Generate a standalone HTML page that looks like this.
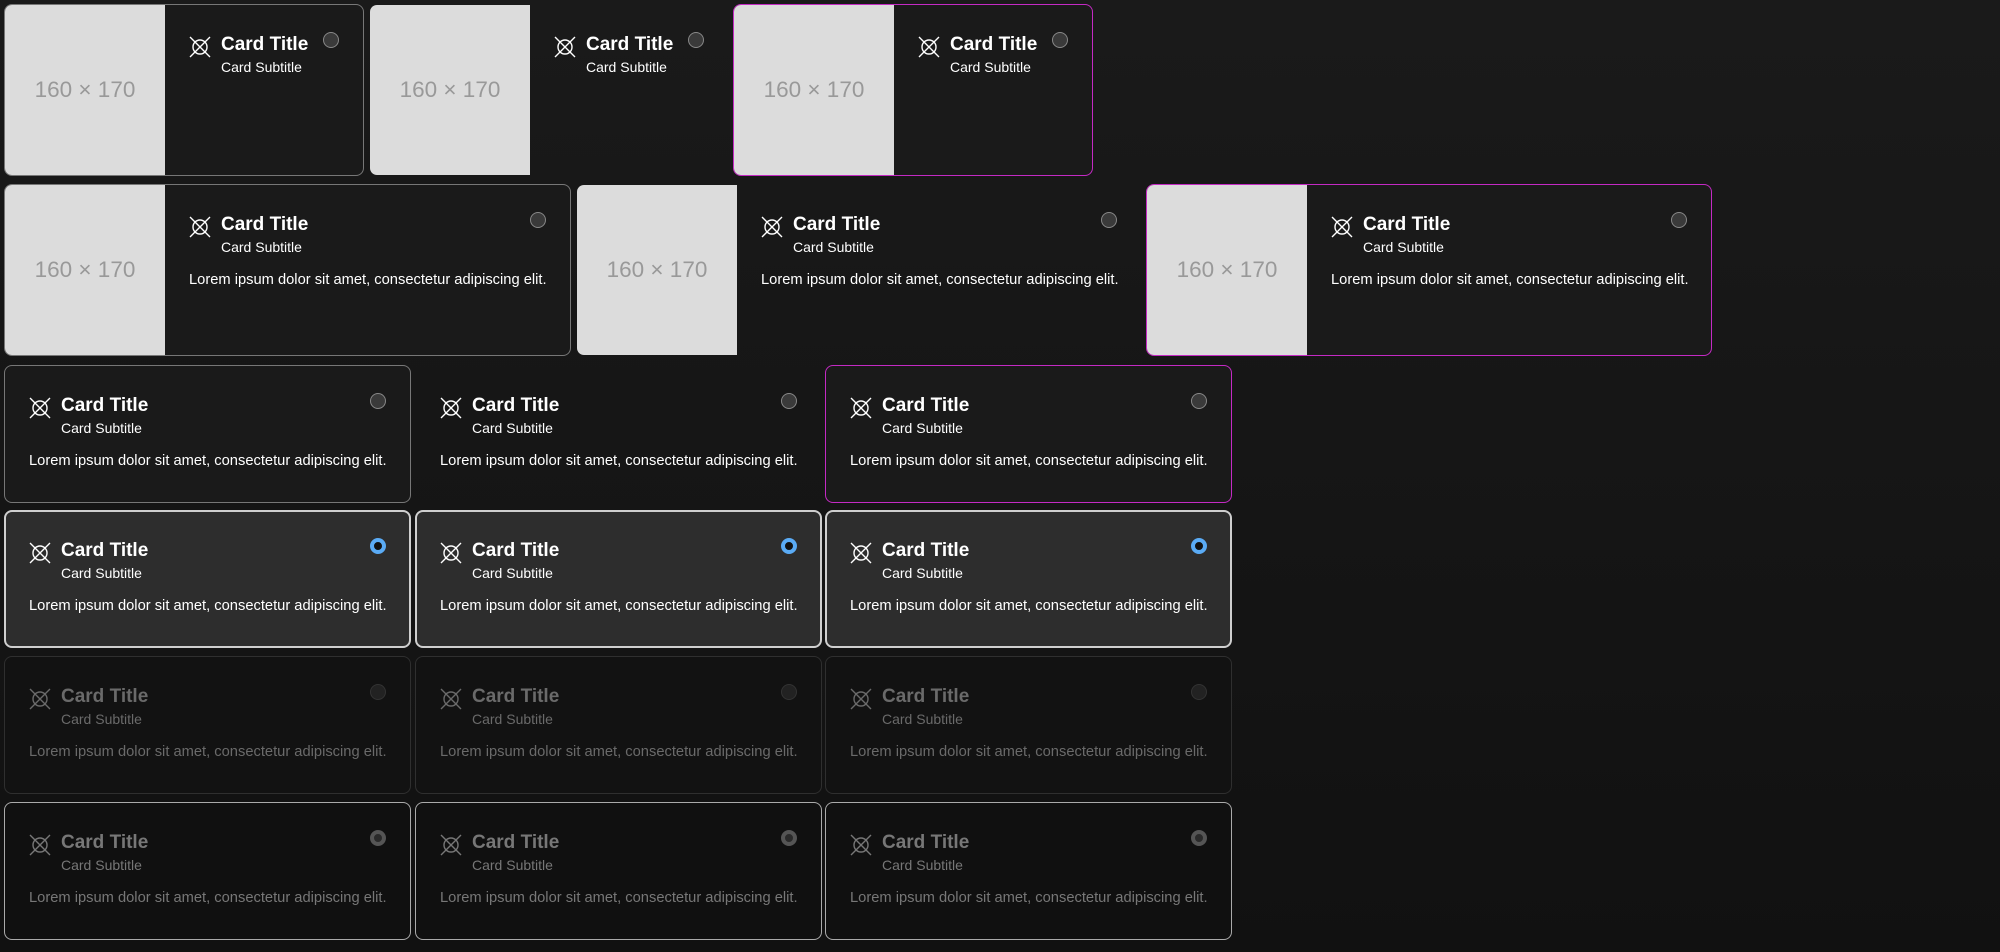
<!DOCTYPE html>
<html><head><meta charset="utf-8"><style>
*{box-sizing:border-box;margin:0;padding:0}
html,body{width:2000px;height:952px;overflow:hidden}
body{background:linear-gradient(#1a1a1a,#111);font-family:"Liberation Sans",sans-serif;position:relative}
.c{position:absolute;border:1px solid #777;border-radius:8px;background:#1a1a1a;overflow:hidden;color:#fff}
.nb{border-color:transparent;background:transparent}
.mg{border-color:#c42ac4}
.sel{border:2px solid #cfcfcf;background:#2d2d2d}
.dis{border-color:#2f2f2f;background:#121212;color:#6a6a6a}
.dc{border:1.5px solid #aaa;background:#101010;color:#777}
.img{position:absolute;left:0;top:0;width:160px;height:100%;background:#dcdcdc;color:#999;font-size:22.5px;font-weight:500;display:flex;align-items:center;justify-content:center}
.ct{position:absolute;top:0;bottom:0;right:0}
.ic{position:absolute;left:24px;top:31px;width:22px;height:22px}
.t{position:absolute;left:56px;top:30px;font-size:19px;line-height:19px;font-weight:bold;white-space:nowrap}
.s{position:absolute;left:56px;top:55px;font-size:14px;line-height:14px;white-space:nowrap}
.b{position:absolute;left:24px;top:88px;font-size:14.7px;line-height:15px;white-space:nowrap}
.r{position:absolute;right:24px;top:27px;width:16px;height:16px;border-radius:50%;background:#3a3a3a;border:1px solid #888}
.sel .r{background:#111;border:4.5px solid #5aabf5;right:23px;top:26px}
.dis .r{background:#222;border-color:#333}
.dc .r{background:#2a2a2a;border:4.5px solid #555}
</style></head><body>
<svg width="0" height="0" style="position:absolute"><defs><symbol id="i" viewBox="0 0 22 22"><circle cx="11" cy="11" r="7" fill="none" stroke="currentColor" stroke-width="1.4"/><path d="M1 1L21 21M21 1L1 21" stroke="currentColor" stroke-width="1.4"/></symbol></defs></svg>

<div class="c" style="left:4px;top:4px;width:360px;height:172px"><div class="img">160 × 170</div><div class="ct" style="left:160px"><svg class="ic"><use href="#i"/></svg><div class="t">Card Title</div><div class="s">Card Subtitle</div><div class="r"></div></div></div>
<div class="c nb" style="left:369px;top:4px;width:360px;height:172px"><div class="img">160 × 170</div><div class="ct" style="left:160px"><svg class="ic"><use href="#i"/></svg><div class="t">Card Title</div><div class="s">Card Subtitle</div><div class="r"></div></div></div>
<div class="c mg" style="left:733px;top:4px;width:360px;height:172px"><div class="img">160 × 170</div><div class="ct" style="left:160px"><svg class="ic"><use href="#i"/></svg><div class="t">Card Title</div><div class="s">Card Subtitle</div><div class="r"></div></div></div>

<div class="c" style="left:4px;top:184px;width:567px;height:172px"><div class="img">160 × 170</div><div class="ct" style="left:160px"><svg class="ic"><use href="#i"/></svg><div class="t">Card Title</div><div class="s">Card Subtitle</div><div class="b">Lorem ipsum dolor sit amet, consectetur adipiscing elit.</div><div class="r"></div></div></div>
<div class="c nb" style="left:576px;top:184px;width:566px;height:172px"><div class="img">160 × 170</div><div class="ct" style="left:160px"><svg class="ic"><use href="#i"/></svg><div class="t">Card Title</div><div class="s">Card Subtitle</div><div class="b">Lorem ipsum dolor sit amet, consectetur adipiscing elit.</div><div class="r"></div></div></div>
<div class="c mg" style="left:1146px;top:184px;width:566px;height:172px"><div class="img">160 × 170</div><div class="ct" style="left:160px"><svg class="ic"><use href="#i"/></svg><div class="t">Card Title</div><div class="s">Card Subtitle</div><div class="b">Lorem ipsum dolor sit amet, consectetur adipiscing elit.</div><div class="r"></div></div></div>

<div class="c" style="left:4px;top:365px;width:407px;height:138px"><svg class="ic"><use href="#i"/></svg><div class="t">Card Title</div><div class="s">Card Subtitle</div><div class="b">Lorem ipsum dolor sit amet, consectetur adipiscing elit.</div><div class="r"></div></div>
<div class="c nb" style="left:415px;top:365px;width:407px;height:138px"><svg class="ic"><use href="#i"/></svg><div class="t">Card Title</div><div class="s">Card Subtitle</div><div class="b">Lorem ipsum dolor sit amet, consectetur adipiscing elit.</div><div class="r"></div></div>
<div class="c mg" style="left:825px;top:365px;width:407px;height:138px"><svg class="ic"><use href="#i"/></svg><div class="t">Card Title</div><div class="s">Card Subtitle</div><div class="b">Lorem ipsum dolor sit amet, consectetur adipiscing elit.</div><div class="r"></div></div>

<div class="c sel" style="left:4px;top:510px;width:407px;height:138px"><svg class="ic" style="left:23px;top:30px"><use href="#i"/></svg><div class="t" style="left:55px;top:29px">Card Title</div><div class="s" style="left:55px;top:54px">Card Subtitle</div><div class="b" style="left:23px;top:87px">Lorem ipsum dolor sit amet, consectetur adipiscing elit.</div><div class="r"></div></div>
<div class="c sel" style="left:415px;top:510px;width:407px;height:138px"><svg class="ic" style="left:23px;top:30px"><use href="#i"/></svg><div class="t" style="left:55px;top:29px">Card Title</div><div class="s" style="left:55px;top:54px">Card Subtitle</div><div class="b" style="left:23px;top:87px">Lorem ipsum dolor sit amet, consectetur adipiscing elit.</div><div class="r"></div></div>
<div class="c sel" style="left:825px;top:510px;width:407px;height:138px"><svg class="ic" style="left:23px;top:30px"><use href="#i"/></svg><div class="t" style="left:55px;top:29px">Card Title</div><div class="s" style="left:55px;top:54px">Card Subtitle</div><div class="b" style="left:23px;top:87px">Lorem ipsum dolor sit amet, consectetur adipiscing elit.</div><div class="r"></div></div>

<div class="c dis" style="left:4px;top:656px;width:407px;height:138px"><svg class="ic"><use href="#i"/></svg><div class="t">Card Title</div><div class="s">Card Subtitle</div><div class="b">Lorem ipsum dolor sit amet, consectetur adipiscing elit.</div><div class="r"></div></div>
<div class="c dis" style="left:415px;top:656px;width:407px;height:138px"><svg class="ic"><use href="#i"/></svg><div class="t">Card Title</div><div class="s">Card Subtitle</div><div class="b">Lorem ipsum dolor sit amet, consectetur adipiscing elit.</div><div class="r"></div></div>
<div class="c dis" style="left:825px;top:656px;width:407px;height:138px"><svg class="ic"><use href="#i"/></svg><div class="t">Card Title</div><div class="s">Card Subtitle</div><div class="b">Lorem ipsum dolor sit amet, consectetur adipiscing elit.</div><div class="r"></div></div>

<div class="c dc" style="left:4px;top:802px;width:407px;height:138px"><svg class="ic"><use href="#i"/></svg><div class="t">Card Title</div><div class="s">Card Subtitle</div><div class="b">Lorem ipsum dolor sit amet, consectetur adipiscing elit.</div><div class="r"></div></div>
<div class="c dc" style="left:415px;top:802px;width:407px;height:138px"><svg class="ic"><use href="#i"/></svg><div class="t">Card Title</div><div class="s">Card Subtitle</div><div class="b">Lorem ipsum dolor sit amet, consectetur adipiscing elit.</div><div class="r"></div></div>
<div class="c dc" style="left:825px;top:802px;width:407px;height:138px"><svg class="ic"><use href="#i"/></svg><div class="t">Card Title</div><div class="s">Card Subtitle</div><div class="b">Lorem ipsum dolor sit amet, consectetur adipiscing elit.</div><div class="r"></div></div>
</body></html>
